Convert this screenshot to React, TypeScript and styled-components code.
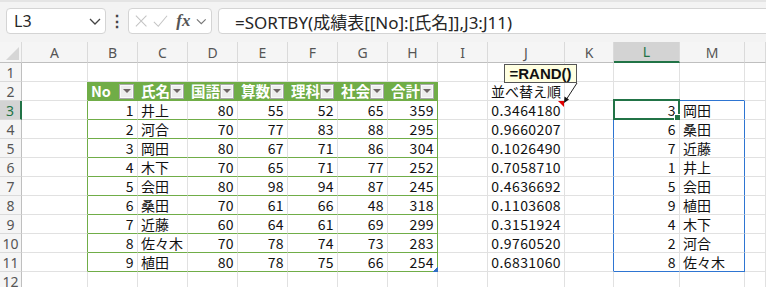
import React from "react";
import styled, { createGlobalStyle } from "styled-components";

const GlobalStyle = createGlobalStyle`
  body {
    margin: 0;
    background: #ffffff;
    font-family: "Noto Sans", "Noto Sans CJK JP", sans-serif;
    overflow: hidden;
  }
`;

const GREEN = "#70ad47";
const GRID = "#e1e1e1";
const BLUE = "#2e75d2";
const SEL = "#217346";

type Row = {
  no: number;
  name: string;
  scores: number[];
  rand: string;
  sortNo: number;
  sortName: string;
};

const rows: Row[] = [
  { no: 1, name: "井上", scores: [80, 55, 52, 65, 359], rand: "0.3464180", sortNo: 3, sortName: "岡田" },
  { no: 2, name: "河合", scores: [70, 77, 83, 88, 295], rand: "0.9660207", sortNo: 6, sortName: "桑田" },
  { no: 3, name: "岡田", scores: [80, 67, 71, 86, 304], rand: "0.1026490", sortNo: 7, sortName: "近藤" },
  { no: 4, name: "木下", scores: [70, 65, 71, 77, 252], rand: "0.7058710", sortNo: 1, sortName: "井上" },
  { no: 5, name: "会田", scores: [80, 98, 94, 87, 245], rand: "0.4636692", sortNo: 5, sortName: "会田" },
  { no: 6, name: "桑田", scores: [70, 61, 66, 48, 318], rand: "0.1103608", sortNo: 9, sortName: "植田" },
  { no: 7, name: "近藤", scores: [60, 64, 61, 69, 299], rand: "0.3151924", sortNo: 4, sortName: "木下" },
  { no: 8, name: "佐々木", scores: [70, 78, 74, 73, 283], rand: "0.9760520", sortNo: 2, sortName: "河合" },
  { no: 9, name: "植田", scores: [80, 78, 75, 66, 254], rand: "0.6831060", sortNo: 8, sortName: "佐々木" },
];

const headers = ["No", "氏名", "国語", "算数", "理科", "社会", "合計"];
const letters = ["A", "B", "C", "D", "E", "F", "G", "H", "I", "J", "K", "L", "M", ""];

const Page = styled.div`
  position: relative;
  width: 766px;
  height: 287px;
  overflow: hidden;
`;

const FormulaBar = styled.div`
  display: flex;
  align-items: center;
  height: 42px;
  box-sizing: border-box;
  padding: 6px 0 8px 6px;
  background: #f3f3f3;
  border-top: 2px solid #e4e4e4;
`;

const Box = styled.div`
  height: 26px;
  box-sizing: border-box;
  background: #ffffff;
  border: 1px solid #d4d4d4;
  border-radius: 4px;
  display: flex;
  align-items: center;
`;

const NameBox = styled(Box)`
  width: 100px;
  padding: 0 4px 0 7px;
  justify-content: space-between;
  font-size: 16px;
  color: #262626;
`;

const Dots = styled.div`
  width: 22px;
  text-align: center;
  font-size: 16px;
  font-weight: 700;
  color: #444;
`;

const FxBox = styled(Box)`
  width: 84px;
  padding: 0 4px 0 6px;
  gap: 6px;
`;

const Fx = styled.span`
  font-family: "Liberation Serif", serif;
  font-style: italic;
  font-weight: 700;
  font-size: 17px;
  color: #555;
  margin-left: 2px;
`;

const FormulaInput = styled(Box)`
  flex: 1;
  margin-left: 6px;
  margin-right: -10px;
  padding-left: 16px;
  font-size: 17px;
  color: #262626;
`;

const Sheet = styled.div`
  display: grid;
  grid-template-columns: 22px 66px repeat(8, 50px) 77px 49px 66px 65px 1fr;
  grid-template-rows: 21px repeat(12, 19px);
  font-family: "Noto Sans CJK JP", sans-serif;
  font-size: 14px;
  color: #111;
`;

const ColHead = styled.div<{ $selected?: boolean }>`
  box-sizing: border-box;
  display: flex;
  align-items: center;
  justify-content: center;
  background: ${(p) => (p.$selected ? "#d3d3d3" : "#f5f5f5")};
  border-right: 1px solid #dadada;
  border-bottom: ${(p) => (p.$selected ? `2px solid ${SEL}` : "1px solid #bfbfbf")};
  font-family: "Noto Sans", sans-serif;
  font-size: 14px;
  color: ${(p) => (p.$selected ? SEL : "#555")};
`;

const Corner = styled.div`
  box-sizing: border-box;
  background: #f5f5f5;
  border-right: 1px solid #dadada;
  border-bottom: 1px solid #bfbfbf;
  display: flex;
  align-items: flex-end;
  justify-content: flex-end;
  padding: 0 2px 2px 0;
`;

const RowHead = styled.div<{ $selected?: boolean }>`
  box-sizing: border-box;
  display: flex;
  align-items: center;
  justify-content: center;
  background: ${(p) => (p.$selected ? "#d3d3d3" : "#f5f5f5")};
  border-right: ${(p) => (p.$selected ? `2px solid ${SEL}` : "1px solid #bfbfbf")};
  border-bottom: 1px solid #dadada;
  font-family: "Noto Sans", sans-serif;
  font-size: 14px;
  color: ${(p) => (p.$selected ? SEL : "#555")};
`;

const Cell = styled.div<{
  $align?: "left" | "right";
  $bg?: string;
  $rb?: string;
  $bb?: string;
  $bold?: boolean;
  $color?: string;
}>`
  position: relative;
  box-sizing: border-box;
  display: flex;
  align-items: center;
  justify-content: ${(p) => (p.$align === "right" ? "flex-end" : "flex-start")};
  padding: 0 3px;
  background: ${(p) => p.$bg ?? "#ffffff"};
  border-right: 1px solid ${(p) => p.$rb ?? GRID};
  border-bottom: 1px solid ${(p) => p.$bb ?? GRID};
  font-weight: ${(p) => (p.$bold ? 700 : 400)};
  font-size: ${(p) => (p.$bold ? "14.5px" : "14px")};
  letter-spacing: ${(p) => (p.$align === "right" ? "0.4px" : "0")};
  color: ${(p) => p.$color ?? "#111"};
  white-space: nowrap;
  line-height: 18px;
`;

const FilterButton = styled.span`
  margin-left: auto;
  width: 15px;
  height: 15px;
  box-sizing: border-box;
  background: #ededed;
  border: 1px solid #a9a9a9;
  box-shadow: inset 0 0 0 1px #fafafa;
  display: flex;
  align-items: center;
  justify-content: center;
  &::after {
    content: "";
    border-left: 4px solid transparent;
    border-right: 4px solid transparent;
    border-top: 4px solid #6e6565;
  }
`;

const Selection = styled.div`
  position: absolute;
  left: -1px;
  top: -2px;
  right: -1px;
  bottom: -1px;
  border: 2px solid ${SEL};
  pointer-events: none;
`;

const FillHandle = styled.div`
  position: absolute;
  right: -4px;
  bottom: -4px;
  width: 6px;
  height: 6px;
  background: ${SEL};
  border: 1px solid #fff;
`;

const CommentMark = styled.div`
  position: absolute;
  top: 0;
  right: 0;
  border-top: 6px solid #e00000;
  border-left: 6px solid transparent;
`;

const ResizeMark = styled.div`
  position: absolute;
  right: -1px;
  bottom: -1px;
  width: 5px;
  height: 5px;
  background: linear-gradient(135deg, transparent 50%, #2f6ec4 50%);
`;

const Callout = styled.div`
  position: absolute;
  left: 504px;
  top: 64px;
  width: 73px;
  height: 19px;
  box-sizing: border-box;
  background: #ffffe1;
  border: 1px solid #555;
  display: flex;
  align-items: center;
  justify-content: center;
  font-family: "Liberation Sans", "Noto Sans", sans-serif;
  font-weight: 700;
  font-size: 15px;
  color: #111;
`;

const Arrow = styled.svg`
  position: absolute;
  left: 558px;
  top: 80px;
`;

const Chevron = ({ color = "#444" }: { color?: string }) => (
  <svg width="12" height="7" viewBox="0 0 12 7">
    <path d="M1 1 L6 6 L11 1" fill="none" stroke={color} strokeWidth="1.3" />
  </svg>
);

const gridRight = (col: number, row: number) => {
  // table outer edges (A|B and H|I), spill range edges (K|L and M|N)
  if (row >= 2 && row <= 11 && (col === 0 || col === 7)) return GREEN;
  if (row >= 3 && row <= 11 && (col === 10 || col === 12)) return BLUE;
  if (row === 2 && col >= 1 && col <= 6) return GREEN;
  return undefined;
};

const gridBottom = (col: number, row: number) => {
  if (row >= 2 && row <= 11 && col >= 1 && col <= 7) return GREEN;
  if ((row === 2 || row === 11) && (col === 11 || col === 12)) return BLUE;
  return undefined;
};

const cellContent = (col: number, row: number): React.ReactNode => {
  if (row === 2 && col === 9) return "並べ替え順";
  if (row >= 3 && row <= 11) {
    const r = rows[row - 3];
    if (col === 1) return r.no;
    if (col === 2) return r.name;
    if (col >= 3 && col <= 7) return r.scores[col - 3];
    if (col === 9) return r.rand;
    if (col === 11) return r.sortNo;
    if (col === 12) return r.sortName;
  }
  return null;
};

const isLeft = (col: number, row: number) =>
  col === 2 || col === 12 || (col === 9 && row === 2);

const App: React.FC = () => {
  const rowNums = Array.from({ length: 12 }, (_, i) => i + 1);
  return (
    <Page>
      <GlobalStyle />
      <FormulaBar>
        <NameBox>
          <span>L3</span>
          <Chevron />
        </NameBox>
        <Dots>⋮</Dots>
        <FxBox>
          <svg width="14" height="14" viewBox="0 0 14 14">
            <path d="M1 1 L13 13 M13 1 L1 13" stroke="#c4c4c4" strokeWidth="1.2" />
          </svg>
          <svg width="17" height="14" viewBox="0 0 17 14">
            <path d="M1 8 L6 13 L16 1" fill="none" stroke="#c4c4c4" strokeWidth="1.2" />
          </svg>
          <Fx>fx</Fx>
          <Chevron color="#777" />
        </FxBox>
        <FormulaInput>=SORTBY(成績表[[No]:[氏名]],J3:J11)</FormulaInput>
      </FormulaBar>

      <Sheet>
        <Corner>
          <svg width="13" height="13" viewBox="0 0 13 13">
            <path d="M13 0 L13 13 L0 13 Z" fill="#d6d6d6" />
          </svg>
        </Corner>
        {letters.map((l, i) => (
          <ColHead key={`h${i}`} $selected={l === "L"}>
            {l}
          </ColHead>
        ))}
        {rowNums.map((row) => (
          <React.Fragment key={row}>
            <RowHead $selected={row === 3}>{row}</RowHead>
            {letters.map((_, col) => {
              const isHeader = row === 2 && col >= 1 && col <= 7;
              return (
                <Cell
                  key={col}
                  $align={isLeft(col, row) || isHeader ? "left" : "right"}
                  $bg={isHeader ? GREEN : undefined}
                  $rb={gridRight(col, row)}
                  $bb={gridBottom(col, row)}
                  $bold={isHeader}
                  $color={isHeader ? "#ffffff" : undefined}
                >
                  {isHeader ? (
                    <>
                      {headers[col - 1]}
                      <FilterButton />
                    </>
                  ) : (
                    cellContent(col, row)
                  )}
                  {row === 3 && col === 9 && <CommentMark />}
                  {row === 3 && col === 11 && (
                    <Selection>
                      <FillHandle />
                    </Selection>
                  )}
                  {row === 11 && col === 7 && <ResizeMark />}
                </Cell>
              );
            })}
          </React.Fragment>
        ))}
      </Sheet>

      <Callout>=RAND()</Callout>
      <Arrow width="22" height="24" viewBox="0 0 22 24">
        <path d="M19 3 L8 20" stroke="#222" strokeWidth="1" />
        <path d="M6 23 L6.5 16.5 L11 19.5 Z" fill="#111" />
      </Arrow>
    </Page>
  );
};

export default App;
